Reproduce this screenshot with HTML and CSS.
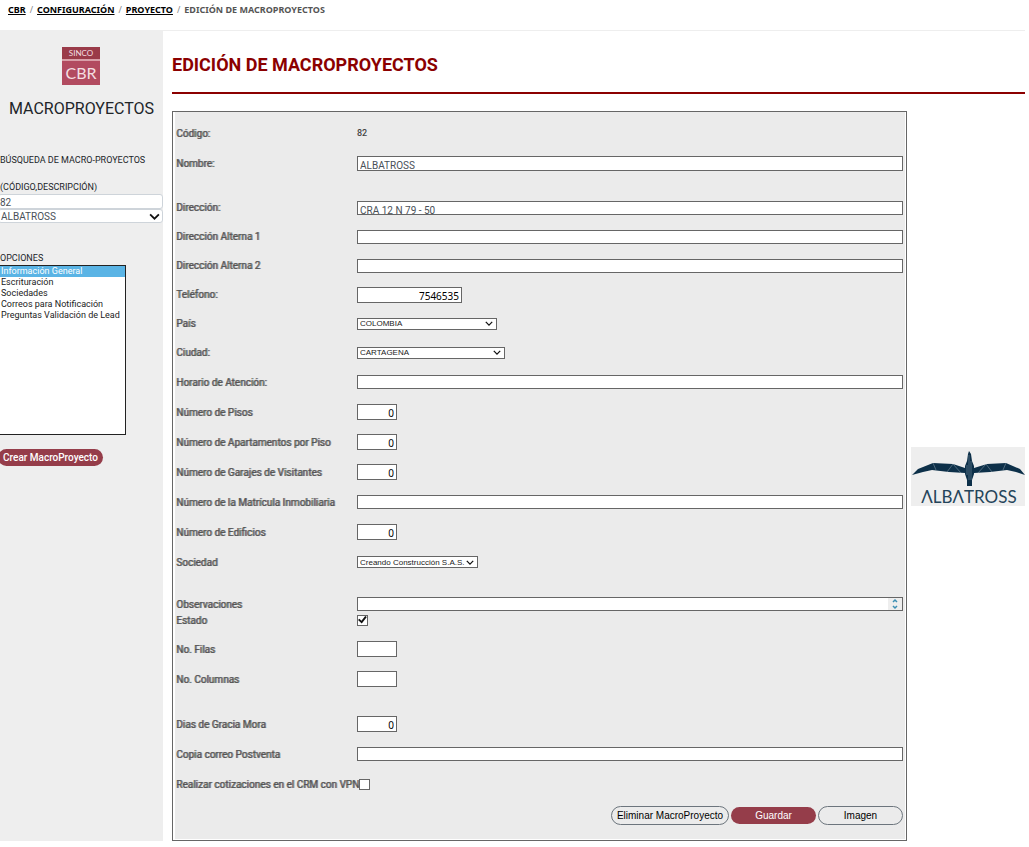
FILE: index.html
```html
<!DOCTYPE html>
<html lang="es">
<head>
<meta charset="utf-8">
<title>Edición de Macroproyectos</title>
<link rel="stylesheet" href="styles.css">
</head>
<body>
<nav class="breadcrumb" aria-label="Ruta">
  <a href="#">CBR</a><span class="sep">/</span><a href="#">CONFIGURACIÓN</a><span class="sep">/</span><a href="#">PROYECTO</a><span class="sep">/</span><span>EDICIÓN DE MACROPROYECTOS</span>
</nav>
<div class="layout">
  <aside class="sidebar">
    <svg class="brand" viewBox="0 0 38 38" role="img" aria-label="SINCO CBR">
      <rect width="38" height="38" fill="#b24b60"/>
      <rect width="38" height="12" fill="#9a3b49"/>
      <rect y="12" width="38" height="2" fill="#d9a0a9"/>
      <text x="19" y="9" class="brand-top">SINCO</text>
      <text x="19" y="32" class="brand-main">CBR</text>
    </svg>
    <h2 class="side-title">MACROPROYECTOS</h2>
    <div class="search">
      <label for="buscar"><span>BÚSQUEDA DE MACRO-PROYECTOS</span><span>(CÓDIGO,DESCRIPCIÓN)</span></label>
      <input id="buscar" class="side-input" type="text" value="82">
      <select class="side-input" aria-label="Macroproyecto"><option>ALBATROSS</option></select>
    </div>
    <div class="options">
      <label for="opciones">OPCIONES</label>
      <select id="opciones" class="listbox" size="14">
        <option selected>Información General</option>
        <option>Escrituración</option>
        <option>Sociedades</option>
        <option>Correos para Notificación</option>
        <option>Preguntas Validación de Lead</option>
      </select>
    </div>
    <button class="btn primary create" type="button">Crear MacroProyecto</button>
  </aside>
  <main class="main">
    <h1 class="title">EDICIÓN DE MACROPROYECTOS</h1>
    <div class="content">
      <form class="panel">
        <div class="panel-body">
          <div class="row"><span class="label">Código:</span><span class="value">82</span></div>
          <div class="row"><label class="label" for="nombre">Nombre:</label><input id="nombre" class="field wide tall" type="text" value="ALBATROSS"></div>
          <div class="row compact space-m"><label class="label" for="dir">Dirección:</label><input id="dir" class="field wide low" type="text" value="CRA 12 N 79 - 50"></div>
          <div class="row compact"><label class="label" for="dir1">Dirección Alterna 1</label><input id="dir1" class="field wide" type="text"></div>
          <div class="row compact"><label class="label" for="dir2">Dirección Alterna 2</label><input id="dir2" class="field wide" type="text"></div>
          <div class="row compact"><label class="label" for="tel">Teléfono:</label><input id="tel" class="field number phone" type="text" value="7546535"></div>
          <div class="row compact"><label class="label" for="pais">País</label><select id="pais" class="select w-country"><option>COLOMBIA</option></select></div>
          <div class="row compact"><label class="label" for="ciudad">Ciudad:</label><select id="ciudad" class="select w-city"><option>CARTAGENA</option></select></div>
          <div class="row"><label class="label" for="horario">Horario de Atención:</label><input id="horario" class="field wide" type="text"></div>
          <div class="row"><label class="label" for="pisos">Número de Pisos</label><input id="pisos" class="field number" type="text" value="0"></div>
          <div class="row"><label class="label" for="aptos">Número de Apartamentos por Piso</label><input id="aptos" class="field number" type="text" value="0"></div>
          <div class="row"><label class="label" for="garajes">Número de Garajes de Visitantes</label><input id="garajes" class="field number" type="text" value="0"></div>
          <div class="row"><label class="label" for="matricula">Número de la Matrícula Inmobiliaria</label><input id="matricula" class="field wide" type="text"></div>
          <div class="row"><label class="label" for="edificios">Número de Edificios</label><input id="edificios" class="field number" type="text" value="0"></div>
          <div class="row"><label class="label" for="sociedad">Sociedad</label><select id="sociedad" class="select w-company"><option>Creando Construcción S.A.S.</option></select></div>
          <div class="row tight space-l"><label class="label" for="obs">Observaciones</label>
            <div class="area"><textarea id="obs" rows="1"></textarea>
              <svg viewBox="0 0 14 12" aria-hidden="true"><path d="M5 4 7 2 9 4M5 8 7 10 9 8" fill="none" stroke="#3c8fb3" stroke-width="1.5"/></svg></div></div>
          <div class="row tight"><label class="label" for="estado">Estado</label><input id="estado" class="check" type="checkbox" checked></div>
          <div class="row space-s"><label class="label" for="filas">No. Filas</label><input id="filas" class="field number" type="text"></div>
          <div class="row"><label class="label" for="columnas">No. Columnas</label><input id="columnas" class="field number" type="text"></div>
          <div class="row space-m"><label class="label" for="gracia">Dias de Gracia Mora</label><input id="gracia" class="field number" type="text" value="0"></div>
          <div class="row"><label class="label" for="copia">Copia correo Postventa</label><input id="copia" class="field wide" type="text"></div>
          <div class="row"><label class="label" for="vpn">Realizar cotizaciones en el CRM con VPN</label><input id="vpn" class="check" type="checkbox"></div>
          <div class="actions">
            <button class="btn outline w-delete" type="button">Eliminar MacroProyecto</button>
            <button class="btn primary w-action" type="button">Guardar</button>
            <button class="btn outline w-action" type="button">Imagen</button>
          </div>
        </div>
      </form>
      <svg class="project-logo" viewBox="0 0 114 59" role="img" aria-label="Albatross">
        <rect width="114" height="59" fill="#eeeeee"/>
        <g fill="#0d3049">
          <path d="M1 28 7 22 22 16 42 17 54 21 54 26 38 25 21 23 12 25Z"/>
          <path d="M114 28 109 22 95 16 76 17 63 21 63 26 79 25 96 23 105 25Z"/>
          <path d="M58 4 60 7 61 14 63 19 63 27 61 33 61 39 56 39 56 33 54 27 54 19 56 14 57 7Z"/>
        </g>
        <path d="M22 16 25 23M36 25 42 17 50 26M95 16 92 23M81 25 75 17 67 26M56 18V28M58 8V33M60 14V33" fill="none" stroke="#8fa3b0" stroke-width=".5"/>
        <text x="58" y="56" class="logo-text">ΛLBΛTROSS</text>
      </svg>
    </div>
  </main>
</div>
</body>
</html>
```
FILE: styles.css
```css
* { box-sizing: border-box; }
body {
  margin: 0;
  padding-right: 4px;
  overflow-x: hidden;
  background: #fff;
  color: #212529;
  font-family: Roboto, sans-serif;
  font-size: 10px;
}
input, select, textarea, button { margin: 0; font-family: inherit; border-radius: 0; }
.breadcrumb {
  display: flex;
  gap: 4px;
  height: 31px;
  padding: 3px 8px;
  border-bottom: 1px solid #eee;
  color: #555;
  font: bold 9px/13px "Noto Sans", sans-serif;
}
.breadcrumb a { color: #000; }
.sep { color: #888; font-weight: normal; }
.layout { display: flex; }
.sidebar {
  flex: 0 0 163px;
  padding-top: 16px;
  overflow: hidden;
  background: #eee;
}
.brand { display: block; width: 38px; height: 38px; margin-left: 62px; }
.brand-top, .brand-main { fill: #f4dfe2; text-anchor: middle; font-family: Lato, sans-serif; }
.brand-top { font-size: 8px; }
.brand-main { font-size: 16px; }
.side-title { margin: 14px 0 0; text-align: center; font-size: 16px; line-height: 20px; font-weight: normal; }
.search, .options { display: flex; flex-direction: column; margin-left: -2px; }
.search label, .options label { padding-left: 2px; font-size: 9px; }
.search { margin-top: 34px; }
.search label { display: flex; flex-direction: column; gap: 13px; line-height: 14px; }
.side-input {
  width: 165px;
  height: 15px;
  padding: 1px 1px 0;
  border: 1px solid #ced4da;
  border-radius: 3px;
  background: #fff;
  color: #495057;
  font-size: 10px;
}
.select, select.side-input {
  appearance: none;
  background: #fff url("data:image/svg+xml,%3Csvg xmlns='http://www.w3.org/2000/svg' viewBox='0 0 10 6'%3E%3Cpath d='M1 1l4 4 4-4' fill='none' stroke='%23111' stroke-width='1.6'/%3E%3C/svg%3E") no-repeat right 3px center / 8px 5px;
}
select.side-input { height: 14px; padding: 0 2px; background-position: right 2px center; background-size: 11px 7px; }
.options { margin-top: 29px; line-height: 13px; }
.listbox {
  width: 128px;
  height: 170px;
  padding: 0;
  overflow: hidden;
  border: 1px solid #222;
  background: #fff;
  color: #222;
  font-size: 9px;
  font-weight: 500;
}
.listbox option { min-height: 0; height: 11px; padding: 0 2px; line-height: 11px; }
.listbox option:checked { background: #5ab4e5 linear-gradient(#5ab4e5, #5ab4e5); color: #fff; -webkit-text-fill-color: #fff; }
.btn {
  height: 17px;
  padding: 0;
  border: 0;
  border-radius: 10px;
  font-size: 10px;
  line-height: 14px;
  white-space: nowrap;
}
.primary { background: #953d4a; color: #fff; }
.create { width: 105px; margin: 14px 0 0 -2px; font-weight: 500; }
.outline { height: 19px; border: 1px solid #6c757d; background: transparent; color: #000; }
.main { flex: 1; min-width: 0; padding-left: 9px; }
.title {
  margin: 0;
  padding: 22px 0 15px;
  border-bottom: 2px solid #8b0000;
  color: #8b0000;
  font-size: 18px;
  font-weight: bold;
  line-height: 24px;
}
.content { display: flex; align-items: center; gap: 4px; padding-top: 17px; }
.panel { flex: 1; min-width: 0; padding: 0 1px 1px 2px; border: 1px solid #666; }
.panel-body { padding: 6px 2px 14px 1px; background: #ebebeb; }
.row { display: flex; align-items: center; height: 30px; }
.compact { height: 29px; }
.tight { height: 16px; }
.space-s { margin-top: 6px; }
.space-m { margin-top: 15px; }
.space-l { margin-top: 19px; }
.label { flex: 0 0 181px; color: #555; text-shadow: 1px 0 #777; white-space: nowrap; }
.value { color: #444; font-size: 9px; font-weight: 500; }
.field { width: 40px; height: 16px; padding: 2px 2px 0; border: 1px solid #666; background: #fff; color: #495057; font-size: 10px; }
.wide { flex: 1; min-width: 0; height: 14px; }
.tall { height: 15px; padding-top: 4px; }
.low { padding-top: 5px; }
.number { color: #000; text-align: right; font-family: "Noto Sans", sans-serif; }
.phone { width: 105px; }
.select { height: 12px; padding: 0 2px; border: 1px solid #666; color: #222; font: 8px "Liberation Sans", sans-serif; }
.w-country { width: 140px; }
.w-city { width: 148px; }
.w-company { width: 121px; }
.area { display: flex; flex: 1; height: 14px; border: 1px solid #666; background: #fff; }
.area textarea { flex: 1; height: 12px; padding: 0 2px; border: 0; resize: none; overflow: hidden; font-size: 9px; }
.area svg { width: 14px; height: 12px; background: #eee; }
.check { appearance: none; width: 11px; height: 11px; border: 1px solid #666; background: #fff; }
.check:checked { display: grid; place-items: center; }
.check:checked::before {
  content: "";
  width: 9px;
  height: 9px;
  background: #111;
  clip-path: polygon(0 50%, 15% 35%, 38% 58%, 80% 5%, 98% 18%, 42% 90%);
}
.actions { display: flex; justify-content: flex-end; align-items: center; gap: 2px; margin-top: 7px; }
.actions .btn { font-family: "Liberation Sans", sans-serif; }
.w-delete { width: 118px; }
.w-action { width: 85px; }
.project-logo { flex: 0 0 114px; height: 59px; }
.logo-text { fill: #24445a; text-anchor: middle; font: 17px Lato, sans-serif; }
```
